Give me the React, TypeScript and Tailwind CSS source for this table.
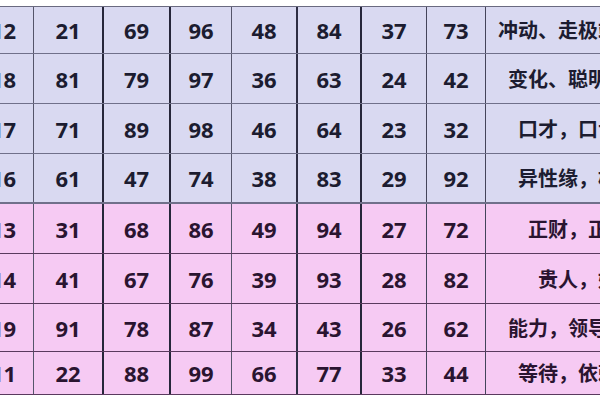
const rows = [
  { nums: ["12", "21", "69", "96", "48", "84", "37", "73"], text: "冲动、走极端、情绪化", tone: "blue" },
  { nums: ["18", "81", "79", "97", "36", "63", "24", "42"], text: "变化、聪明、有鬼才", tone: "blue" },
  { nums: ["17", "71", "89", "98", "46", "64", "23", "32"], text: "口才，口舌是非多", tone: "blue" },
  { nums: ["16", "61", "47", "74", "38", "83", "29", "92"], text: "异性缘，桃花旺盛", tone: "blue" },
  { nums: ["13", "31", "68", "86", "49", "94", "27", "72"], text: "正财，正缘婚姻", tone: "pink" },
  { nums: ["14", "41", "67", "76", "39", "93", "28", "82"], text: "贵人，好运气", tone: "pink" },
  { nums: ["19", "91", "78", "87", "34", "43", "26", "62"], text: "能力，领导，有担当", tone: "pink" },
  { nums: ["11", "22", "88", "99", "66", "77", "33", "44"], text: "等待，依赖，保守", tone: "pink" },
];

const heights = ["h-[47px]", "h-[50px]", "h-[50px]", "h-[50px]", "h-[50px]", "h-[50px]", "h-[48px]", "h-[43px]"];

// right border of each numeric column
const colBorder = [
  "w-[60px] border-r border-r-[#55556a]",
  "w-[70px] border-r-2 border-r-[#26263a]",
  "w-[67px] border-r-2 border-r-[#26263a]",
  "w-[61px] border-r border-r-[#55556a]",
  "w-[66px] border-r-2 border-r-[#2e2e44]",
  "w-[64px] border-r-2 border-r-[#26263a]",
  "w-[65px] border-r border-r-[#44445a]",
  "w-[59px] border-r border-r-[#44445a]",
];

export default function App() {
  return (
    <div className="w-[600px] h-[400px] overflow-hidden bg-white pt-[6px]">
      <div className="ml-[-26px] w-[736px] border-t border-t-[#6a6a80]">
        {rows.map((row, i) => {
          const blue = row.tone === "blue";
          return (
            <div
              key={i}
              className={`flex ${heights[i]} ${
                blue
                  ? "bg-[#d9d9f1] text-[#1c1c30] border-b border-b-[#70708a]"
                  : "bg-[#f6caf3] text-[#2a1430] border-b border-b-[#5a3a5e]"
              } ${i === 3 ? "border-b-2 border-b-[#3a3050]" : ""}`}
            >
              {row.nums.map((n, j) => (
                <div
                  key={j}
                  className={`${colBorder[j]} shrink-0 flex items-center justify-center font-['Noto_Sans',sans-serif] font-bold text-[22px] leading-none`}
                >
                  {n}
                </div>
              ))}
              <div className="w-[224px] shrink-0 flex items-center justify-center font-['Noto_Sans_CJK_SC',sans-serif] font-bold text-[20px] leading-none whitespace-nowrap">
                {row.text}
              </div>
            </div>
          );
        })}
      </div>
    </div>
  );
}
